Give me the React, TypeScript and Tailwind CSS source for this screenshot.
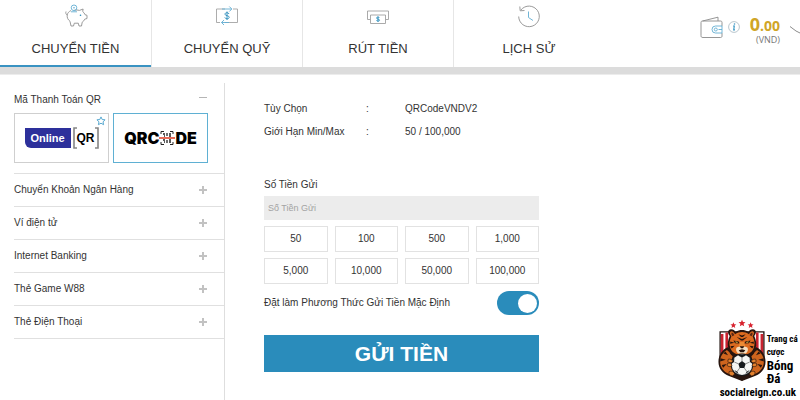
import { useState } from "react";
import type { ReactNode } from "react";

const TABS = [
	{ id: "deposit", label: "CHUYỂN TIỀN", icon: <PiggyIcon /> },
	{ id: "transfer", label: "CHUYỂN QUỸ", icon: <TransferIcon /> },
	{ id: "withdraw", label: "RÚT TIỀN", icon: <WithdrawIcon /> },
	{ id: "history", label: "LỊCH SỬ", icon: <HistoryIcon /> },
];

const METHODS = [
	"Chuyển Khoản Ngân Hàng",
	"Ví điện tử",
	"Internet Banking",
	"Thẻ Game W88",
	"Thẻ Điện Thoại",
];

const AMOUNTS = ["50", "100", "500", "1,000", "5,000", "10,000", "50,000", "100,000"];

export default function App() {
	return (
		<div className="relative flex min-h-screen flex-col overflow-hidden bg-white font-['Liberation_Sans',Arial,sans-serif] text-[10px] leading-4 text-[#333]">
			<Header />
			<div className="h-2 border-b border-[#ececec] bg-[#dcdcdc]" />
			<div className="flex flex-1 pt-2">
				<Sidebar />
				<DepositForm />
			</div>
			<SiteBadge />
		</div>
	);
}

function Header() {
	const [active, setActive] = useState("deposit");

	return (
		<header className="flex justify-between">
			<nav className="flex">
				{TABS.map((tab) => (
					<button
						key={tab.id}
						type="button"
						onClick={() => setActive(tab.id)}
						className={
							tab.id === active
								? "flex h-[67px] w-[151px] flex-col items-center border-b-2 border-[#3a93c2] pt-1 text-[13px] leading-5"
								: "flex h-[67px] w-[151px] flex-col items-center border-l border-[#e6e6e6] pt-1 text-[13px] leading-5"
						}
					>
						{tab.icon}
						<span className="mt-[11px]">{tab.label}</span>
					</button>
				))}
			</nav>
			<div className="flex items-start pt-4">
				<WalletIcon />
				<InfoIcon />
				<div className="ml-2 w-8 text-right font-['Open_Sans',sans-serif]">
					<p className="text-sm leading-4 font-bold text-[#d0a526]">
						<span className="text-lg leading-4">0</span>.00
					</p>
					<p className="text-[9px] leading-3 text-[#777]">(VND)</p>
				</div>
				<svg className="mt-2 ml-2.5 h-3 w-2.5" viewBox="0 0 10 12" fill="none" stroke="#8c8c8c">
					<path d="M0 2.500 6 7l4 2" />
				</svg>
			</div>
		</header>
	);
}

function Sidebar() {
	return (
		<aside className="w-[225px] shrink-0 border-r border-[#dedede] pl-3.5">
			<button type="button" className="flex h-[30px] w-full items-center justify-between pt-1 pr-[17px]">
				<span>Mã Thanh Toán QR</span>
				<span className="mb-1.5 h-px w-2 bg-[#b5b5b5]" />
			</button>
			<div className="flex gap-1">
				<OnlineQrCard />
				<QrCodeCard />
			</div>
			<ul className="mt-2.5 border-b border-[#e0e0e0]">
				{METHODS.map((method) => (
					<li key={method} className="border-t border-[#e0e0e0]">
						<button type="button" className="flex h-8 w-full items-center justify-between pr-[17px]">
							<span>{method}</span>
							<svg className="size-2" viewBox="0 0 8 8" stroke="#c2c2c2" strokeWidth="2">
								<path d="M4 0v8M0 4h8" />
							</svg>
						</button>
					</li>
				))}
			</ul>
		</aside>
	);
}

function OnlineQrCard() {
	return (
		<button
			type="button"
			className="relative flex h-[50px] w-[95px] items-center justify-center border border-[#cfcfcf] text-[11px] font-bold"
		>
			<span className="flex h-5 w-[46px] items-center justify-center rounded-bl-md bg-[#2d309b] text-white">
				Online
			</span>
			<span className="relative ml-0.5 flex h-[22px] w-[26px] items-center justify-center text-xs text-black">
				<svg className="absolute inset-0 size-full" viewBox="0 0 26 22" fill="none" stroke="#858585" strokeWidth="1.6">
					<path d="M4 1H1v20h3M22 1h3v20h-3" />
				</svg>
				QR
			</span>
			<svg className="absolute top-0.5 right-0.5 size-2.5" viewBox="0 0 10 10" fill="none" stroke="#5aa9d0">
				<path d="m5 .9 1.2 2.6 2.9.3L7 5.8l.6 2.9L5 7.2 2.400 8.700 3 5.800.9 3.800l2.900-.3z" />
			</svg>
		</button>
	);
}

function QrCodeCard() {
	return (
		<button
			type="button"
			className="flex h-[50px] w-[95px] items-center justify-center border border-[#5fb0d3] font-['Inter',sans-serif] text-base font-black text-black"
		>
			<span>QRC</span>
			<svg className="h-4 w-4" viewBox="-1 0 16 16" fill="none" stroke="#222">
				<path d="M1 4V1.500h3M13 4V1.500h-3M1 12v2.500h3M13 12v2.500h-3" />
				<path d="M3 4h2M9 4h2M4 6h1M9 6h2M7 3v3M3 10h2M9 10h2M4 12h1M9 12h2M7 10v3" strokeWidth="1.300" />
				<path d="M-1 8h16" stroke="#e2452f" strokeWidth="1.600" />
			</svg>
			<span>DE</span>
		</button>
	);
}

function DepositForm() {
	const [amount, setAmount] = useState("");
	const [isDefault, setIsDefault] = useState(true);

	return (
		<main className="flex-1 pt-[18px] pl-[39px]">
			<form className="max-w-[275px]" onSubmit={(e) => e.preventDefault()}>
				<dl className="grid grid-cols-[102px_1fr] gap-y-[7px]">
					<Detail label="Tùy Chọn">QRCodeVNDV2</Detail>
					<Detail label="Giới Hạn Min/Max">50 / 100,000</Detail>
				</dl>
				<label htmlFor="amount" className="mt-[37px] block">
					Số Tiền Gửi
				</label>
				<input
					id="amount"
					value={amount}
					onChange={(e) => setAmount(e.target.value)}
					placeholder="Số Tiền Gửi"
					className="mt-[3px] block h-6 w-full bg-[#ececec] px-1 text-[9px] outline-none placeholder:text-[#a3a3a3]"
				/>
				<div className="mt-1.5 grid grid-cols-4 gap-x-[7px] gap-y-1.5">
					{AMOUNTS.map((value) => (
						<button
							key={value}
							type="button"
							onClick={() => setAmount(value)}
							className="h-[26px] border border-[#e2e2e2]"
						>
							{value}
						</button>
					))}
				</div>
				<div className="mt-[7px] flex h-6 items-center justify-between">
					<label htmlFor="default-method">Đặt làm Phương Thức Gửi Tiền Mặc Định</label>
					<input
						id="default-method"
						type="checkbox"
						role="switch"
						checked={isDefault}
						onChange={(e) => setIsDefault(e.target.checked)}
						className="flex h-6 w-[42px] appearance-none items-center rounded-full bg-[#bbb] px-0.5 before:size-[19px] before:rounded-full before:bg-white checked:justify-end checked:bg-[#2a8cbb]"
					/>
				</div>
				<button type="submit" className="mt-5 h-[37px] w-full bg-[#2a8cbb] text-[21px] font-bold text-white">
					GỬI TIỀN
				</button>
			</form>
		</main>
	);
}

function Detail({ label, children }: { label: string; children: ReactNode }) {
	return (
		<>
			<dt>{label}</dt>
			<dd className="flex">
				<span className="w-[39px]">:</span>
				{children}
			</dd>
		</>
	);
}

// Logo strony w prawym dolnym rogu
function SiteBadge() {
	return (
		<a
			href="#home"
			className="absolute right-1 bottom-0 font-['Liberation_Sans_Narrow','Roboto_Condensed','Roboto',sans-serif] font-bold text-black"
		>
			<span className="flex">
				<TigerLogo />
				<span className="flex w-[29px] flex-col pt-3.5 leading-[13px] whitespace-nowrap">
					<span className="text-[9px]">Trang cá</span>
					<span className="text-[9px]">cược</span>
					<span className="text-[13px]">Bóng</span>
					<span className="text-[13px]">Đá</span>
				</span>
			</span>
			<span className="block pl-[3px] text-[11px] leading-[15px]">socialreign.co.uk</span>
		</a>
	);
}

function PiggyIcon() {
	return (
		<svg className="size-6" viewBox="0 0 24 24" fill="none" stroke="#909090" strokeWidth=".9" strokeLinejoin="round">
			<path d="M7 6.500C5 7.500 3.500 9 3.200 11 2 10.500 1.500 9 2 7.500M3.200 11c-.3 2.500.5 4.500 2.800 6.300L7 22h2.500l.8-2.800h4L15 22h2.500l.7-3.800c1.300-.8 2-1.800 2.500-3l2.300-.7v-3.200l-2-.6c-.5-1.500-1.300-2.500-2.300-3.200l.4-2.500-3.600 1.400c-1.700-.5-3.300-.5-5-.3" />
			<circle cx="10" cy="3.800" r="2.800" stroke="#62aed2" />
			<path d="M9 3.800h2M7 7.800h6" stroke="#62aed2" />
			<circle cx="16.500" cy="11.300" r=".8" fill="#2a8cbb" stroke="none" />
		</svg>
	);
}

function TransferIcon() {
	return (
		<svg className="size-6" viewBox="0 0 24 24" fill="none" stroke="#a4a4a4" strokeWidth=".9">
			<path d="M6 5H1.500v13.500H5M18 5h4.500v13.500H10M6 5h4" />
			<path d="M7 5h9.500M14.300 2.500 16.800 5l-2.500 2.500M14 18.500H6.500M9 16l-2.500 2.500L9 21" stroke="#62aed2" />
			<path
				d="M14 10c-.3-.9-1-1.300-2-1.300-1.200 0-2 .5-2 1.500 0 2 4.200 1 4.200 3 0 1-.9 1.600-2.100 1.600-1.200 0-2-.5-2.300-1.400M12 7.500v8.500"
				stroke="#2a8cbb"
			/>
		</svg>
	);
}

function WithdrawIcon() {
	return (
		<svg className="size-6" viewBox="0 0 24 24" fill="none" stroke="#a0a0a0" strokeWidth=".9">
			<path d="M4.500 15.500h-3V7h21v8.500h-3" />
			<path d="M4.500 11h15v8.500h-15z" />
			<path
				d="M13.500 13.900c-.3-.6-.8-.8-1.500-.8-.9 0-1.500.3-1.500 1 0 1.300 3.100.7 3.100 2 0 .7-.7 1-1.600 1-.8 0-1.400-.3-1.600-.9M12 12.400v5.500"
				stroke="#2a8cbb"
			/>
		</svg>
	);
}

function HistoryIcon() {
	return (
		<svg className="size-6" viewBox="0 0 24 24" fill="none" stroke="#8f8f8f" strokeWidth=".9">
			<path d="M1.700 12.500A10.300 10.300 0 1 0 4 5.900M2.800 2.500 3.200 6.800 7.500 6.500" />
			<path d="M11.500 7.500V13.500L16 16.500" stroke="#62aed2" />
		</svg>
	);
}

function WalletIcon() {
	return (
		<svg className="h-[23px] w-6" viewBox="0 0 24 23" fill="none" stroke="#8a8a8a" strokeWidth=".9">
			<path d="M22 10V6.500c0-1-.5-1.500-1.500-1.500H2.500C1.500 5 1 5.500 1 6.500v13C1 21 1.500 21.500 3 21.500h17.500c1 0 1.500-.5 1.500-1.500v-3" />
			<path d="M2.500 5 18 1.200V5" />
			<path d="M22 10h-6.500a3.500 3.500 0 0 0 0 7H22zM18.500 13.500h3.500" stroke="#62aed2" />
			<circle cx="15.800" cy="13.500" r="1.500" stroke="#62aed2" />
		</svg>
	);
}

function InfoIcon() {
	return (
		<svg className="mt-[5px] ml-1 size-3" viewBox="0 0 12 12" fill="none" stroke="#a8b8c0" strokeWidth=".8">
			<circle cx="6" cy="6" r="5.400" />
			<path d="M5 5h1.300L5.700 8.800H7" stroke="#3f9ac6" strokeWidth="1.200" />
			<circle cx="6.500" cy="3" r=".8" fill="#3f9ac6" stroke="none" />
		</svg>
	);
}

function TigerLogo() {
	return (
		<svg className="h-[63px] w-[50px]" viewBox="50 25 150 190">
			{/* gwiazdy */}
			<g fill="#d8232f">
				<path d="m99 35 2.500 6 6.500.5-5 4.200 1.600 6.300-5.600-3.500-5.600 3.500 1.600-6.300-5-4.200 6.500-.5z" />
				<path d="m125 27 3 7 7.500.6-5.700 5 1.800 7.400-6.600-4-6.600 4 1.800-7.400-5.700-5 7.500-.6z" />
				<path d="m151 35 2.500 6 6.500.5-5 4.200 1.600 6.300-5.600-3.500-5.600 3.500 1.600-6.300-5-4.200 6.500-.5z" />
			</g>
			{/* tarcza w pasy */}
			<path d="M57 62h136v75c0 36-35 58-68 74-33-16-68-38-68-74z" fill="#20130f" />
			<path d="M61 66h128v70c0 33-32 53-64 69-32-16-64-36-64-69z" fill="#fff" />
			<path
				d="M61 70h8v66h-8zM75 66h8v60h-8zM167 66h8v60h-8zM181 70h8v66h-8z"
				fill="#c92330"
			/>
			{/* tułów i łapy */}
			<path
				d="M82 110c-17 7-28 24-28 44 0 20 13 37 32 43l39 15 39-15c19-6 32-23 32-43 0-20-11-37-28-44z"
				fill="#27140e"
			/>
			<path d="M84 116c-15 7-25 20-25 37 0 17 10 31 27 38l14-5-9-31 8-24z" fill="#cf651e" />
			<path d="M166 116c15 7 25 20 25 37 0 17-10 31-27 38l-14-5 9-31-8-24z" fill="#cf651e" />
			<path
				d="m60 143 16 5-17 5M64 164l15-3-11 11M75 123l8 11-14-5M190 143l-16 5 17 5M186 164l-15-3 11 11M175 123l-8 11 14-5"
				fill="#27140e"
			/>
			{/* głowa */}
			<path
				d="M88 76c-8-8-6-20 4-20 7 0 11 4 14 8 12-8 26-8 38 0 3-4 7-8 14-8 10 0 12 12 4 20 6 14 8 26 4 37l7 3-10 9c-5 13-22 20-38 20s-33-7-38-20l-10-9 7-3c-4-11-2-23 4-37z"
				fill="#27140e"
			/>
			<path
				d="M93 77c-6-7-5-14 0-15 5 0 9 5 11 9 12-9 30-9 42 0 2-4 6-9 11-9 5 1 6 8 0 15 6 13 8 24 3 36-6 15-20 20-35 20s-29-5-35-20c-5-12-3-23 3-36z"
				fill="#dc6b20"
			/>
			<path d="M94 66c4 0 7 5 8 8l-6 3c-3-3-4-8-2-11zM156 66c-4 0-7 5-8 8l6 3c3-3 4-8 2-11z" fill="#5a2716" />
			<path
				d="m114 71 11 4 11-4-8 8h-6zM109 79l16 6 16-6-13 11h-6zM90 93l12 4-13 3M160 93l-12 4 13 3M90 107l13-1-9 8M160 107l-13-1 9 8"
				fill="#27140e"
			/>
			<path d="m99 90 16 3 3 6-14-1zM151 90l-16 3-3 6 14-1z" fill="#27140e" />
			<path d="m105 92 8 3-2 2-5-1zM145 92l-8 3 2 2 5-1z" fill="#f6cf51" />
			<path d="M119 94h12l5 17-5 7h-12l-5-7z" fill="#ec8c35" />
			<path d="M109 111c5-3 11-3 16 1 5-4 11-4 16-1 4 5 1 15-5 18h-22c-6-3-9-13-5-18z" fill="#f4dfc2" />
			<path d="M118 107h14l-4 6h-6zM115 119l10-3 10 3-5 6h-10z" fill="#27140e" />
			{/* piłka */}
			<circle cx="125" cy="163" r="34" fill="#17191c" />
			<circle cx="125" cy="163" r="31" fill="#f5f5f3" />
			<path d="m125 152 11 8-4 13h-14l-4-13z" fill="#17191c" />
			<path
				d="M125 152v-12M136 160l12-5M132 173l8 11M118 173l-8 11M114 160l-12-5"
				stroke="#555"
				strokeWidth="2"
			/>
			<path
				d="m113 135 12 6 12-6-6-3h-12zM148 143l1 12 7 5c0-7-3-13-8-17zM102 143l-1 12-7 5c0-7 3-13 8-17zM139 184l9-5c-3 6-7 9-13 12zM111 184l-9-5c3 6 7 9 13 12z"
				fill="#17191c"
			/>
			{/* pazury */}
			<path
				d="M84 146c7-1 12 2 13 8-5 4-11 3-15-1zM82 158c7-1 12 3 13 8-5 4-11 3-15-1zM166 146c-7-1-12 2-13 8 5 4 11 3 15-1zM168 158c-7-1-12 3-13 8 5 4 11 3 15-1zM86 184c6-4 15 0 17 7l-7 6c-7-1-12-6-10-13zM164 184c-6-4-15 0-17 7l7 6c7-1 12-6 10-13z"
				fill="#e3812e"
				stroke="#27140e"
				strokeWidth="2"
			/>
		</svg>
	);
}
